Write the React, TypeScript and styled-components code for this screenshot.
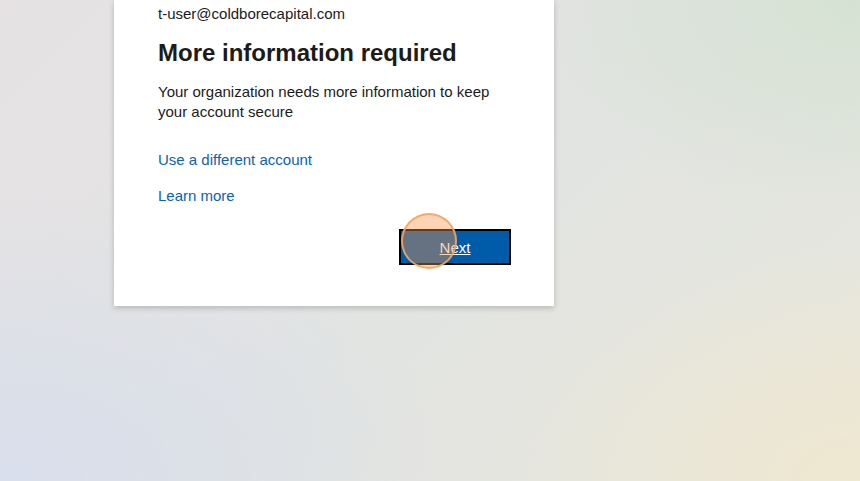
import React from 'react';
import styled, { createGlobalStyle } from 'styled-components';

const GlobalStyle = createGlobalStyle`
	html, body {
		margin: 0;
		padding: 0;
	}
	body {
		font-family: 'Liberation Sans', Arial, sans-serif;
		color: #1b1b1b;
	}
`;

export default function App() {
	return (
		<>
			<GlobalStyle />
			<Page>
				<Card>
					<Identity>t-user@coldborecapital.com</Identity>
					<Title>More information required</Title>
					<Description>
						Your organization needs more information to keep your account secure
					</Description>
					<LinkList>
						<TextLink href="#">Use a different account</TextLink>
						<TextLink href="#">Learn more</TextLink>
					</LinkList>
					<ButtonRow>
						<ButtonWrap>
							<PrimaryButton type="button">Next</PrimaryButton>
							<ClickMarker />
						</ButtonWrap>
					</ButtonRow>
				</Card>
			</Page>
		</>
	);
}

const Page = styled.div`
	width: 860px;
	height: 481px;
	overflow: hidden;
	background:
		radial-gradient(ellipse 60% 70% at 100% 100%, rgba(240, 232, 208, 0.95), rgba(240, 232, 208, 0) 70%),
		radial-gradient(ellipse 55% 60% at 100% 0%, rgba(212, 226, 210, 0.95), rgba(212, 226, 210, 0) 75%),
		radial-gradient(ellipse 65% 75% at 0% 100%, rgba(216, 222, 236, 1), rgba(216, 222, 236, 0) 80%),
		linear-gradient(135deg, #e6e2e4 0%, #e2e4e2 50%, #e6e6dc 100%);
	padding-left: 114px;
	box-sizing: border-box;
`;

const Card = styled.div`
	width: 440px;
	box-sizing: border-box;
	background: #ffffff;
	padding: 4px 43px 41px 44px;
	box-shadow: 0 2px 6px rgba(0, 0, 0, 0.2);
	display: flex;
	flex-direction: column;
`;

const Identity = styled.div`
	font-size: 15px;
	line-height: 20px;
	color: #1b1b1b;
`;

const Title = styled.h1`
	margin: 15px 0 0;
	font-size: 24px;
	line-height: 28px;
	font-weight: 700;
	color: #1b1b1b;
`;

const Description = styled.p`
	margin: 15px 0 0;
	font-size: 15px;
	line-height: 20px;
	color: #1b1b1b;
`;

const LinkList = styled.div`
	margin-top: 28px;
	display: flex;
	flex-direction: column;
	gap: 16px;
`;

const TextLink = styled.a`
	font-size: 15px;
	line-height: 20px;
	color: #0b63b0;
	text-decoration: none;
	align-self: flex-start;
`;

const ButtonRow = styled.div`
	margin-top: 23px;
	display: flex;
	justify-content: flex-end;
`;

const ButtonWrap = styled.div`
	position: relative;
	display: flex;
`;

const PrimaryButton = styled.button`
	width: 112px;
	height: 36px;
	box-sizing: border-box;
	background: #005ba9;
	border: 2px solid #000000;
	color: #ffffff;
	font-family: 'Liberation Sans', Arial, sans-serif;
	font-size: 15px;
	text-decoration: underline;
	padding: 0;
	cursor: pointer;
`;

const ClickMarker = styled.span`
	position: absolute;
	left: 2px;
	top: -16px;
	width: 52px;
	height: 52px;
	border-radius: 50%;
	background: rgba(250, 150, 70, 0.4);
	border: 2px solid rgba(244, 164, 96, 0.9);
	pointer-events: none;
`;
